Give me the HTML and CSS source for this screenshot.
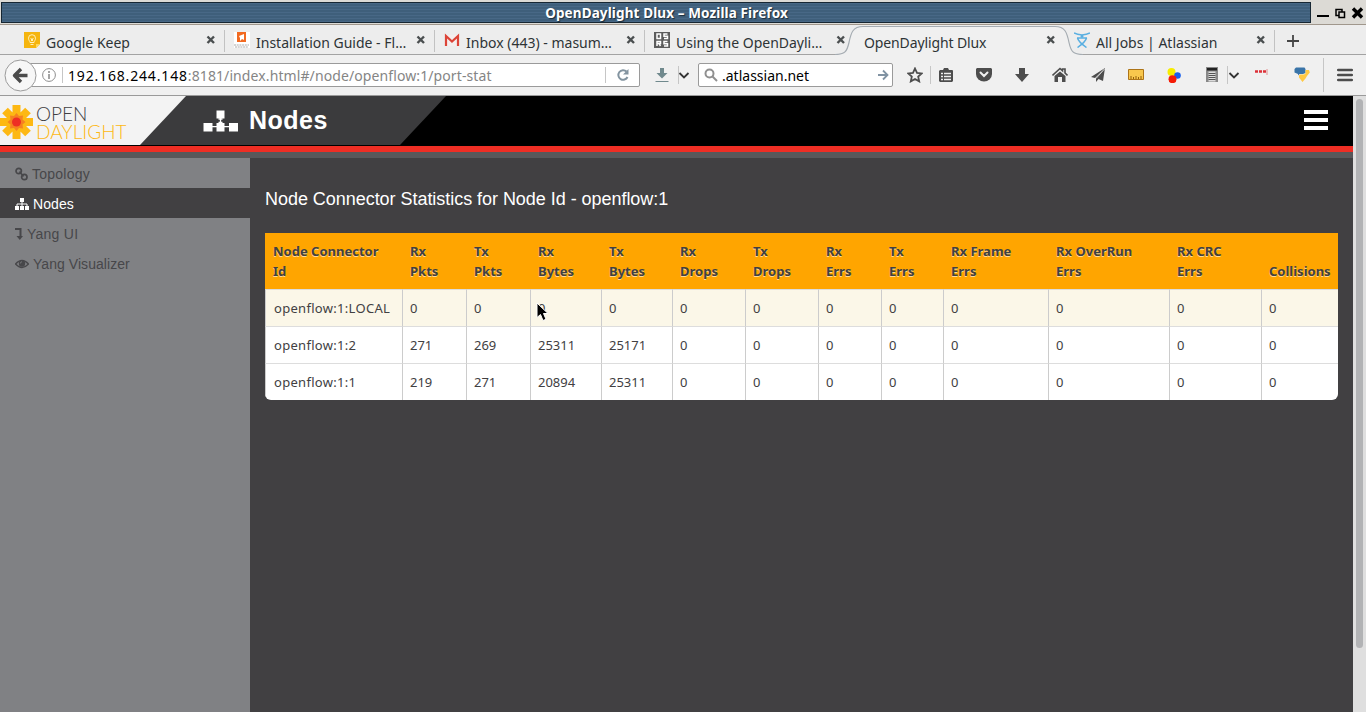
FILE: index.html
```html
<!DOCTYPE html>
<html lang="en">
<head>
<meta charset="utf-8">
<title>OpenDaylight Dlux</title>
<link rel="stylesheet" href="styles.css">
</head>
<body>
<div class="titlebar">
  <div class="caption"><span class="caption-text">OpenDaylight Dlux – Mozilla Firefox</span></div>
  <svg class="winbtns" width="55" height="24" viewBox="1311 0 55 24"><path d="M1317 16h12" stroke="#000" stroke-width="2"/><path d="M1336 9.500h6v6h-6z" fill="none" stroke="#000" stroke-width="1.500"/><path d="M1339 12h5.500v5.500h-5.500z" fill="#dcdad5" stroke="#000" stroke-width="1.500"/><path d="M1353 8.500l9 9m0-9l-9 9" stroke="#000" stroke-width="3.400"/></svg>
</div>

<div class="tabs">
  <div class="tab">
    <svg class="fav" width="16" height="16"><path d="M0 0h16v12l-4 4H0z" fill="#f5b50f"/><path d="M12 16v-4h4z" fill="#ffd95e"/><path d="M6 10.500C6 9 4.500 8.500 4.500 6.200a3.500 3.500 0 0 1 7 0C11.500 8.500 10 9 10 10.500zM6.500 12.500h3M7.500 9V7l-1-1m2 3V7l1-1" fill="none" stroke="#fff1bd"/></svg>
    <span class="label t1">Google Keep</span><svg class="x" width="10" height="10"><path d="M1.500 1.500l6.500 6.500m0-6.500l-6.500 6.500"/></svg>
  </div>
  <div class="tab">
    <svg class="fav" width="16" height="16"><path d="M0 0h16v16H0z" fill="#fff"/><path d="M3 0h9v10H3z" fill="#f26a21"/><path d="M5 4l5-2v6l-2-1-2 2V6z" fill="#fff"/><path d="M0 13h15M1 15h13" stroke="#aaa" stroke-dasharray="2 .7"/></svg>
    <span class="label t2">Installation Guide - Fl…</span><svg class="x" width="10" height="10"><path d="M1.500 1.500l6.500 6.500m0-6.500l-6.500 6.500"/></svg>
  </div>
  <div class="tab">
    <svg class="fav" width="16" height="16"><path d="M1 3h14v11H1z" fill="#f4eeee"/><path d="M2 14V4l6 5.500L14 4v10" fill="none" stroke="#dc4437" stroke-width="2.200"/></svg>
    <span class="label t3">Inbox (443) - masum…</span><svg class="x" width="10" height="10"><path d="M1.500 1.500l6.500 6.500m0-6.500l-6.500 6.500"/></svg>
  </div>
  <div class="tab nosep">
    <svg class="fav" width="16" height="16"><path d="M0 0h16v16H0z" fill="#5c5c5c"/><path d="M3 2h3.500v4.500H3zM13.500 2H10v2.300h3.500v2.200H10M3 14V9.500h3.500v2H3M5 11.500L6.500 14M13.500 9.500H10v2.200h3.500V14H10" fill="none" stroke="#fff" stroke-width="1.500"/></svg>
    <span class="label t4">Using the OpenDayli…</span><svg class="x" width="10" height="10"><path d="M1.500 1.500l6.500 6.500m0-6.500l-6.500 6.500"/></svg>
  </div>
  <div class="tab active">
    <svg class="tabshape" width="250" height="30"><path d="M0 30v-.5c10 0 12-3 14-12 2-10 4-16 14-16h192c10 0 12 6 14 16 2 9 4 12 14 12v.500z" fill="#f0f0f0"/><path d="M0 29.500c10 0 12-3 14-12 2-10 4-16 14-16h192c10 0 12 6 14 16 2 9 4 12 14 12" fill="none" stroke="#a5acb2" stroke-width="1.200"/></svg>
    <span class="label t5">OpenDaylight Dlux</span><svg class="x" width="10" height="10"><path d="M1.500 1.500l6.500 6.500m0-6.500l-6.500 6.500"/></svg>
  </div>
  <div class="tab">
    <svg class="fav" width="16" height="16" fill="none" stroke="#59afe1" stroke-width="1.500"><path d="M0 1c4 2.500 12 2.500 16 0M3 6h10M3.500 6q1 4 9 9.500M12.500 6q-1 4-9 9.500"/><circle cx="8" cy="4.300" r=".8" fill="#59afe1"/></svg>
    <span class="label t6">All Jobs | Atlassian</span><svg class="x" width="10" height="10"><path d="M1.500 1.500l6.500 6.500m0-6.500l-6.500 6.500"/></svg>
  </div>
  <svg class="newtab" width="14" height="14"><path d="M7 1v12M1 7h12" stroke="#454545" stroke-width="1.800"/></svg>
</div>

<div class="toolbar">
  <svg class="back" width="33" height="33"><circle cx="16.500" cy="16.500" r="15.500" fill="#f7f7f7" stroke="#9b9b9b"/><path d="M17 10l-6.500 6.500L17 23M11 16.500h12.500" fill="none" stroke="#4b4b4b" stroke-width="3.400" stroke-linejoin="round"/></svg>
  <div class="urlbar">
    <svg class="info" width="14" height="14" fill="none" stroke="#8e8e8e"><circle cx="7" cy="7" r="6.400"/><path d="M7 3v2M7 6v5" stroke-width="1.600"/></svg>
    <span class="vsep"></span>
    <span class="url"><b>192.168.244.148</b>:8181/index.html#/node/openflow:1/port-stat</span>
    <span class="vsep"></span>
    <svg class="reload" width="14" height="14"><path d="M10.500 3.500A4.800 4.800 0 1 0 11.500 9" fill="none" stroke="#8394a0" stroke-width="2"/><path d="M12.500 1v5.500H7z" fill="#8394a0"/></svg>
  </div>
  <svg class="ic dl" width="16" height="16"><path d="M6 1h4v5h3.500L8 11.500 2.500 6H6z" fill="#70898d"/><path d="M1.500 14.500h13" stroke="#70898d"/></svg>
  <span class="vsep s1"></span>
  <svg class="chev" width="12" height="12"><path d="M1.500 4L6 8.500 10.500 4" fill="none" stroke="#333" stroke-width="1.800"/></svg>
  <div class="search">
    <svg width="14" height="14" fill="none" stroke="#909090" stroke-width="2"><circle cx="5.500" cy="5.500" r="4"/><path d="M8.500 8.500L13 13"/></svg>
    <span class="query">.atlassian.net</span>
    <svg width="12" height="12" fill="none" stroke="#8193a3" stroke-width="1.800"><path d="M1 6h9M6 1.500L10.500 6 6 10.500"/></svg>
  </div>
  <svg class="ic star" width="16" height="16"><path d="M8 1.500l2 4.400 4.700.5-3.500 3.200 1 4.800L8 12l-4.200 2.400 1-4.800L1.300 6.400 6 5.900z" fill="none" stroke="#4d4d4d" stroke-width="1.800"/></svg>
  <span class="vsep s2"></span>
  <div class="tools">
    <svg width="16" height="16"><path d="M2 3h3l1-2h4l1 2h3a1 1 0 0 1 1 1v10l-1 1H2l-1-1V4z" fill="#4d4d4d"/><path d="M3 6.500h2m1 0h7M3 9.500h2m1 0h7M3 12.500h2m1 0h7" stroke="#f0f0f0" stroke-width="1.500"/></svg>
    <svg width="16" height="16"><path d="M1 1h14l1 1v5a8 7.500 0 0 1-16 0V2z" fill="#4d4d4d"/><path d="M4.500 5.500L8 9l3.500-3.500" fill="none" stroke="#f0f0f0" stroke-width="2" stroke-linecap="round"/></svg>
    <svg width="16" height="16"><path d="M5 1h6v6h4l-7 8-7-8h4z" fill="#4d4d4d"/></svg>
    <svg width="16" height="16"><path d="M.5 8.500L8 1.500l2.500 2.300V2H13v4l2.500 2.500" fill="none" stroke="#4d4d4d" stroke-width="1.600"/><path d="M8 4.500L13.500 9v6H10v-5H6v5H2.500V9z" fill="#4d4d4d"/></svg>
    <svg width="16" height="16"><path d="M15 1L1 10l4 1zM15 1L6 11v4l2.500-3L13 14z" fill="#4d4d4d"/><path d="M14.500 2L6 11.500" stroke="#eee" stroke-width=".8"/></svg>
    <svg width="18" height="16"><path d="M1.500 2.500h15v10h-15z" fill="#f8c74d" stroke="#ad7418"/><path d="M4 12V9m2.500 3v-2m2.500 2V9m2.500 3v-2m2.500 2V9" stroke="#94600d"/></svg>
    <svg width="16" height="16"><circle cx="5.500" cy="5" r="4" fill="#f7ed00"/><circle cx="11.500" cy="8.500" r="3.300" fill="#175fed"/><circle cx="6.500" cy="12.200" r="4" fill="#f51b06"/></svg>
    <svg width="16" height="16"><path d="M2 0h12v15H2z" fill="#888"/><path d="M3 1h10v2.500H3z" fill="#222"/><path d="M4.500 4.500h7v10h-7z" fill="#dcdcdc"/><path d="M4.500 6.500h7M4.500 8.500h7M4.500 10.500h7M4.500 12.500h7" stroke="#555"/></svg>
  </div>
  <span class="vsep s3"></span>
  <svg class="chev" width="12" height="12"><path d="M1.500 4L6 8.500 10.500 4" fill="none" stroke="#333" stroke-width="1.800"/></svg>
  <svg class="dots" width="13" height="16"><path d="M0 4.500h3m1 0h3m1 0h3" stroke="#dc3038" stroke-width="2.400"/><path d="M12 2v6" stroke="#d77" stroke-width=".8"/></svg>
  <svg class="py" width="16" height="16"><path d="M2 0.500h8.500l1 1.500v4L9 7H5.500L4 8.500V7L.5 5.500V2z" fill="#3974a8"/><path d="M11.500 3H15l.8 2.500L13 9l-1.500 2.500L8.500 15 5 10.500V8.500L6 7.500h4l1.500-1z" fill="#ffc943"/></svg>
  <span class="vsep tall"></span>
  <svg class="menu" width="16" height="14"><path d="M1.200 2h13.600M1.200 7h13.600M1.200 12h13.600" stroke="#4d4d4d" stroke-width="2.600" stroke-linecap="round"/></svg>
</div>

<div class="viewport">
  <div class="page">
    <header class="top">
      <div class="brand">
        <svg class="sun" width="33" height="34"><g stroke="#fdb813" stroke-width="8"><path d="M16.500 0v34M-1 17h34M5 5.500l23 23M28 5.500l-23 23"/></g><path d="M16.500 8l2.500 3 4-.5-.5 4 3 2.500-3 2.500.5 4-4-.5-2.500 3-2.500-3-4 .5.500-4-3-2.500 3-2.500-.5-4 4 .5z" fill="#f58220"/><circle cx="16.500" cy="17" r="4.500" fill="#ee2e24"/></svg>
        <div class="brandname"><span class="open">OPEN</span><span class="day">DAYLIGHT</span></div>
      </div>
      <div class="section">
        <svg width="36" height="22" fill="#fff"><path d="M13.500.5h8v8h-8zM.5 13h9v8.500h-9zM13.500 13h8v8.500h-8zM26 13h9v8.500h-9z"/><path d="M17.500 8v6M15.500 9h4M9 16.700h18M15.500 12.500h4" stroke="#fff" stroke-width="1.300"/></svg>
        <h1>Nodes</h1>
      </div>
      <svg class="burger" width="24" height="20"><path d="M0 2h24M0 10h24M0 18h24" stroke="#fff" stroke-width="4"/></svg>
    </header>
    <div class="redline"></div>
    <div class="body">
      <nav class="side">
        <a class="n1"><svg width="13" height="14" fill="none" stroke="#47474a" stroke-width="1.700"><circle cx="3.700" cy="4" r="2.700"/><circle cx="9.300" cy="10" r="2.700"/><path d="M4.500 4.500L8.500 9.500"/></svg><span>Topology</span></a>
        <a class="n2 on"><svg width="14" height="14" fill="#fff"><path d="M5 1h4v4H5zM0 9h4v4H0zM5 9h4v4H5zM10 9h4v4h-4z"/><path d="M7 5v4M2 9V7h10v2" fill="none" stroke="#fff"/></svg><span>Nodes</span></a>
        <a class="n3"><svg width="8" height="14"><path d="M0 2h5.500v8" fill="none" stroke="#47474a" stroke-width="2"/><path d="M1.500 9H8l-3.200 4z" fill="#47474a"/></svg><span>Yang UI</span></a>
        <a class="n4"><svg width="14" height="14"><path d="M.5 7Q7 0 13.500 7 7 14 .5 7z" fill="none" stroke="#47474a" stroke-width="1.300"/><circle cx="7" cy="6.500" r="3.200" fill="#47474a"/><path d="M5.300 6.500Q5.300 5 7 4.700" fill="none" stroke="#808184" stroke-width=".8"/></svg><span>Yang Visualizer</span></a>
      </nav>
      <main>
        <h2><span>Node Connector Statistics for Node Id - openflow:1</span></h2>
        <table>
          <colgroup><col class="c137"><col class="c64"><col class="c64"><col class="c71"><col class="c71"><col class="c73"><col class="c73"><col class="c63"><col class="c62"><col class="c105"><col class="c121"><col class="c92"><col class="c77"></colgroup>
          <thead><tr><th>Node Connector<br>Id</th><th>Rx<br>Pkts</th><th>Tx<br>Pkts</th><th>Rx<br>Bytes</th><th>Tx<br>Bytes</th><th>Rx<br>Drops</th><th>Tx<br>Drops</th><th>Rx<br>Errs</th><th>Tx<br>Errs</th><th>Rx Frame<br>Errs</th><th>Rx OverRun<br>Errs</th><th>Rx CRC<br>Errs</th><th>Collisions</th></tr></thead>
          <tbody>
            <tr class="hover"><td>openflow:1:LOCAL</td><td>0</td><td>0</td><td>0</td><td>0</td><td>0</td><td>0</td><td>0</td><td>0</td><td>0</td><td>0</td><td>0</td><td>0</td></tr>
            <tr><td>openflow:1:2</td><td>271</td><td>269</td><td>25311</td><td>25171</td><td>0</td><td>0</td><td>0</td><td>0</td><td>0</td><td>0</td><td>0</td><td>0</td></tr>
            <tr><td>openflow:1:1</td><td>219</td><td>271</td><td>20894</td><td>25311</td><td>0</td><td>0</td><td>0</td><td>0</td><td>0</td><td>0</td><td>0</td><td>0</td></tr>
          </tbody>
        </table>
      </main>
    </div>
  </div>
  <div class="scroll"><div class="thumb"></div></div>
</div>
<svg class="cursor" width="14" height="20"><path d="M1 1v14.500l3.500-3 2.500 6 3-1.300-2.500-5.700h4.500z" fill="#000" stroke="#fff"/></svg>
</body>
</html>
```
FILE: styles.css
```css
* { box-sizing: border-box; }
body { margin: 0; width: 1366px; height: 712px; overflow: hidden; display: flex; flex-direction: column; font-family: "Noto Sans", sans-serif; background: #f0f0f0; }
svg { display: block; flex: none; }

.titlebar { height: 25px; flex: none; display: flex; background: #dcdad5; border-bottom: 1px solid #a0978c; padding: 2px 0 0 1px; }
.caption { width: 1310px; height: 21px; border: 1px solid #172733; background: repeating-linear-gradient(#486886 0 1px, #3f5f7b 1px 3px); color: #fff; text-align: center; font-weight: 700; font-size: 13.500px; letter-spacing: .12px; line-height: 21px; text-shadow: 1px 1px 1px #1b2b38; padding-left: 21px; }
.winbtns { margin-top: -2px; }

.tabs { height: 30px; flex: none; display: flex; padding-left: 15px; background: #ededed; border-bottom: 1px solid #a3a3a3; }
.tab { width: 210px; height: 29px; position: relative; display: flex; align-items: center; padding: 5px 9px 0 9px; font-size: 14px; color: #2e3436; white-space: nowrap; }
.tab::after { content: ""; position: absolute; right: 0; top: 5px; width: 1px; height: 22px; background: #c2c2c2; }
.tab.nosep::after, .tab.active::after { display: none; }
.fav { margin: -4px 6px 0 0; }
.label { flex: 1; position: relative; }
.t5 { letter-spacing: -.12px; }
.x { position: relative; margin-top: -4px; stroke: #4b4f50; stroke-width: 2.400; fill: none; }
.tabshape { position: absolute; left: -20px; top: 0; }
.newtab { margin: 9px 0 0 11px; }

.toolbar { height: 41px; flex: none; display: flex; align-items: center; background: #f0f0f0; border-bottom: 1px solid #9a9a9a; padding-left: 4px; }
.back { position: relative; z-index: 1; margin-right: -8px; }
.urlbar { width: 611px; height: 24px; border: 1px solid #9a9a9a; border-radius: 2px; background: #fff; display: flex; align-items: center; font-size: 14px; color: #858585; padding-left: 12px; }
.url { flex: 1; margin-left: 5px; white-space: nowrap; letter-spacing: .1px; }
.url b { font-weight: 400; color: #000; letter-spacing: .83px; }
.vsep { width: 1px; height: 16px; background: #c6c6c6; flex: none; }
.info { margin-right: 6px; }
.reload { margin: 0 9px 0 10px; }
.dl { margin: 0 8px 0 14px; }
.s1 { height: 18px; }
.chev { margin: 0 0 0 -1px; }
.search { width: 195px; height: 24px; border: 1px solid #9a9a9a; border-radius: 2px; background: #fff; display: flex; align-items: center; padding: 0 3px 0 5px; margin-left: 8px; font-size: 14px; }
.query { flex: 1; margin-left: 4px; }
.star { margin: 0 7px 0 14px; }
.s2 { height: 18px; }
.tools { width: 297px; display: grid; grid-template-columns: repeat(8, 38px); justify-items: center; margin: 0 0 0 -4px; }
.s3 { height: 18px; margin-left: 3px; }
.s3 + .chev { margin-left: 0; }
.dots { margin-left: 15px; }
.py { margin-left: 26px; }
.tall { height: 34px; margin-left: 13px; }
.menu { margin-left: 13px; }

.viewport { flex: 1; display: flex; min-height: 0; }
.page { width: 1353px; display: flex; flex-direction: column; font-family: "Liberation Sans", sans-serif; }
.top { height: 50px; display: flex; background: #000; position: relative; border-bottom: 1px solid #000; }
.brand { width: 186px; background: #f3f3f3; clip-path: polygon(0 0, 186px 0, 140px 49px, 0 49px); display: flex; padding: 9px 0 0 0; position: relative; z-index: 1; }
.brandname { display: flex; flex-direction: column; margin-left: 3px; font-family: Lato, sans-serif; font-weight: 300; font-size: 19px; line-height: 18px; color: #414042; }
.day { color: #fdb813; }
.section { width: 306px; margin-left: -46px; padding-left: 63px; background: #3b3b3d; clip-path: polygon(0 0, 306px 0, 260px 49px, 0 49px); display: flex; align-items: center; gap: 10px; }
h1 { margin: 0; color: #fff; font-size: 25px; line-height: 49px; letter-spacing: .5px; }
.burger { margin: 14px 25px 0 auto; }
.redline { height: 12px; flex: none; background: #58585a; border-top: 6px solid #ee2e24; }
.body { flex: 1; display: flex; }
.side { width: 250px; background: #808184; }
.side a { height: 30px; display: flex; align-items: center; gap: 4px; padding: 1px 0 0 15px; font-size: 14px; letter-spacing: .25px; color: #47474a; }
.side a.on { background: #414042; color: #fff; letter-spacing: .1px; }
.side a.n4 { letter-spacing: .05px; }
main { flex: 1; background: #414042; padding: 29px 15px 0; }
h2 { margin: 0 0 22px; height: 24px; font-size: 18px; line-height: 24px; font-weight: 400; letter-spacing: -.04px; color: #fff; white-space: nowrap; }
table { width: 1073px; table-layout: fixed; border-collapse: separate; border-spacing: 0; font-family: "Noto Sans", sans-serif; font-size: 13px; color: #414042; background: #fff; border-radius: 0 0 6px 6px; overflow: hidden; }
th { height: 56px; background: #ffa500; padding: 8px; text-align: left; vertical-align: bottom; line-height: 20px; font-weight: 700; white-space: nowrap; text-shadow: 0 1px 0 rgba(255,255,255,.6); }
td { height: 37px; padding: 0 0 0 7px; border-left: 1px solid #ccc; border-top: 1px solid #ddd; line-height: 20px; white-space: nowrap; }
td:first-child { padding-left: 8px; letter-spacing: .3px; }
.hover td { background: #fbf7e8; }
.c137 { width: 137px; } .c64 { width: 64px; } .c71 { width: 71px; } .c73 { width: 73px; } .c63 { width: 63px; } .c62 { width: 62px; } .c105 { width: 105px; } .c121 { width: 121px; } .c92 { width: 92px; } .c77 { width: 77px; }
.scroll { width: 13px; background: #dfdfdf; padding: 3px 0 0 3px; }
.thumb { width: 7px; height: 549px; border-radius: 4px; background: #b2b3b5; }
.cursor { position: absolute; left: 536px; top: 302px; }
```
